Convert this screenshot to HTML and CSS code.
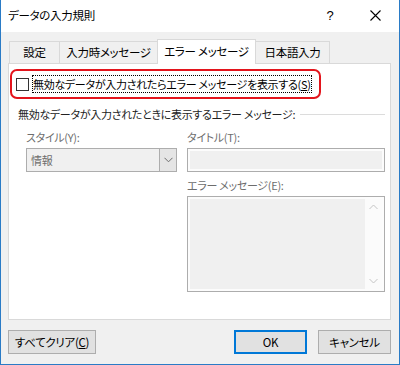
FILE: index.html
```html
<!DOCTYPE html>
<html lang="ja">

<head>
  <meta charset="UTF-8">
  <title>データの入力規則</title>
  <link rel="stylesheet" href="styles.css">
</head>

<body>
  <div class="window">
    <!-- タイトルバー -->
    <div class="titlebar">
      <span class="title">データの入力規則</span>
      <span class="help">?</span>
      <span class="close">
        <svg width="11" height="11" viewBox="0 0 11 11">
          <path d="M0.5 0.5 L10.5 10.5 M10.5 0.5 L0.5 10.5" stroke="#000" stroke-width="1.1" fill="none" />
        </svg>
      </span>
    </div>

    <div class="content">
      <!-- タブ -->
      <div class="tabs">
        <div class="tab tab-setting">設定</div>
        <div class="tab tab-input">入力時メッセージ</div>
        <div class="tab tab-error active">エラー メッセージ</div>
        <div class="tab tab-ime">日本語入力</div>
      </div>

      <div class="panel">
        <div class="notice">
          <span class="checkbox"></span>
          <span class="check-label">無効なデータが入力されたらエラー メッセージを表示する(<u>S</u>)</span>
        </div>

        <div class="group">
          <div class="legend">
            <span>無効なデータが入力されたときに表示するエラー メッセージ:</span>
            <span class="rule"></span>
          </div>

          <div class="columns">
            <div class="col-left">
              <div class="field-label">スタイル(Y):</div>
              <div class="select">
                <span class="select-value">情報</span>
                <span class="select-btn">
                  <svg width="9" height="6" viewBox="0 0 9 6">
                    <path d="M0.5 0.8 L4.5 4.8 L8.5 0.8" stroke="#6d6d6d" stroke-width="1" fill="none" />
                  </svg>
                </span>
              </div>
            </div>

            <div class="col-right">
              <div class="field-label">タイトル(T):</div>
              <div class="textbox"></div>
              <div class="field-label second">エラー メッセージ(E):</div>
              <div class="textarea">
                <div class="textarea-fill"></div>
                <div class="scrollbar">
                  <svg width="9" height="6" viewBox="0 0 9 6">
                    <path d="M0.5 5 L4.5 1 L8.5 5" stroke="#c4c4c4" stroke-width="1" fill="none" />
                  </svg>
                  <svg width="9" height="6" viewBox="0 0 9 6">
                    <path d="M0.5 1 L4.5 5 L8.5 1" stroke="#c4c4c4" stroke-width="1" fill="none" />
                  </svg>
                </div>
              </div>
            </div>
          </div>
        </div>
      </div>

      <!-- ボタン -->
      <div class="buttons">
        <button class="btn btn-clear">すべてクリア(<u>C</u>)</button>
        <span class="spacer"></span>
        <button class="btn btn-ok">OK</button>
        <button class="btn btn-cancel">キャンセル</button>
      </div>
    </div>
  </div>
</body>

</html>
```

FILE: styles.css
```css
* {
  margin: 0;
  padding: 0;
  box-sizing: border-box;
}

body {
  font-family: "Noto Sans CJK JP", "Noto Sans", sans-serif;
  font-size: 11px;
  letter-spacing: -0.3px;
  font-feature-settings: "palt";
  color: #000;
  background: #fff;
}

.window {
  width: 400px;
  height: 365px;
  background-color: #f0f0f0;
  border: 1px solid #2a7bc6;
  border-top: none;
  display: flex;
  flex-direction: column;
}

/* タイトルバー */
.titlebar {
  height: 32px;
  background-color: #fff;
  display: flex;
  align-items: center;
  padding-left: 7px;
}

.title {
  flex: 1;
  font-size: 11.5px;
  line-height: 16px;
  margin-top: -2px;
}

.help {
  font-family: "Liberation Sans", sans-serif;
  font-size: 13px;
  width: 20px;
  text-align: center;
  margin-right: 30px;
  margin-top: -2px;
}

.close {
  width: 11px;
  height: 11px;
  margin-right: 18px;
  margin-top: -2px;
  display: flex;
}

.content {
  flex: 1;
  display: flex;
  flex-direction: column;
  padding: 7px 8px 9px 7px;
}

/* タブ */
.tabs {
  display: flex;
  align-items: flex-end;
  height: 24px;
  padding-left: 1px;
}

.tab {
  height: 22px;
  border: 1px solid #d9d9d9;
  border-bottom: none;
  border-left: none;
  text-align: center;
  line-height: 21px;
  font-size: 11.5px;
  background-color: #f0f0f0;
  white-space: nowrap;
}

.tab-setting {
  width: 51px;
  border-left: 1px solid #d9d9d9;
}

.tab-input {
  width: 98px;
}

.tab-error {
  width: 98px;
}

.tab-ime {
  width: 74px;
}

.tab.active {
  height: 25px;
  margin-bottom: -1px;
  margin-left: -1px;
  width: 99px;
  border-left: 1px solid #d9d9d9;
  background-color: #fff;
  line-height: 22px;
  position: relative;
  z-index: 1;
}

.panel {
  height: 257px;
  background-color: #fff;
  border: 1px solid #d9d9d9;
  padding: 5px 5px 0 1px;
}

/* 赤枠のチェックボックス */
.notice {
  width: 311px;
  height: 30px;
  border: 2px solid #e3141c;
  border-radius: 7px;
  display: flex;
  align-items: center;
  padding-left: 4px;
}

.checkbox {
  width: 13px;
  height: 13px;
  border: 1px solid #333;
  background-color: #fff;
}

.check-label {
  margin-left: 3px;
  padding: 1px 1px;
  line-height: 16px;
  white-space: nowrap;
  outline: 1px dotted #000;
  outline-offset: -1px;
}

.group {
  margin-top: 7px;
}

.legend {
  display: flex;
  align-items: center;
  padding-left: 8px;
  line-height: 16px;
  color: #222;
  white-space: nowrap;
}

.rule {
  flex: 1;
  height: 1px;
  background-color: #dcdcdc;
  margin-left: 5px;
}

.columns {
  display: flex;
  gap: 10px;
  padding-left: 16px;
  margin-top: 7px;
}

.col-left {
  width: 151px;
}

.col-right {
  width: 198px;
}

.field-label {
  color: #6d6d6d;
  line-height: 16px;
  margin-bottom: 3px;
}

.field-label.second {
  margin-top: 5px;
}

.select {
  height: 24px;
  border: 1px solid #adadad;
  background-color: #f0f0f0;
  display: flex;
}

.select-value {
  flex: 1;
  color: #6d6d6d;
  line-height: 22px;
  padding-left: 4px;
}

.select-btn {
  width: 17px;
  border-left: 1px solid #adadad;
  background-color: #e5e5e5;
  display: flex;
  align-items: center;
  justify-content: center;
}

.textbox {
  height: 24px;
  border: 1px solid #adadad;
  background-color: #f0f0f0;
  box-shadow: inset 0 0 0 2px #fcfcfc;
}

.textarea {
  height: 96px;
  border: 1px solid #adadad;
  padding: 2px;
  display: flex;
  background-color: #fcfcfc;
}

.textarea-fill {
  flex: 1;
  background-color: #f0f0f0;
}

.scrollbar {
  width: 17px;
  display: flex;
  flex-direction: column;
  justify-content: space-between;
  align-items: center;
  padding: 5px 0 5px;
  background-color: #fbfbfb;
}

/* ボタン */
.buttons {
  display: flex;
  margin-top: 10px;
  height: 24px;
}

.spacer {
  flex: 1;
}

.btn {
  font-family: inherit;
  font-size: 11.5px;
  letter-spacing: -0.3px;
  font-feature-settings: "palt";
  height: 24px;
  background-color: #e1e1e1;
  border: 1px solid #adadad;
  color: #000;
}

.btn-clear {
  width: 88px;
}

.btn-ok {
  width: 73px;
  border: 2px solid #0078d7;
}

.btn-cancel {
  width: 73px;
  margin-left: 11px;
}
```
